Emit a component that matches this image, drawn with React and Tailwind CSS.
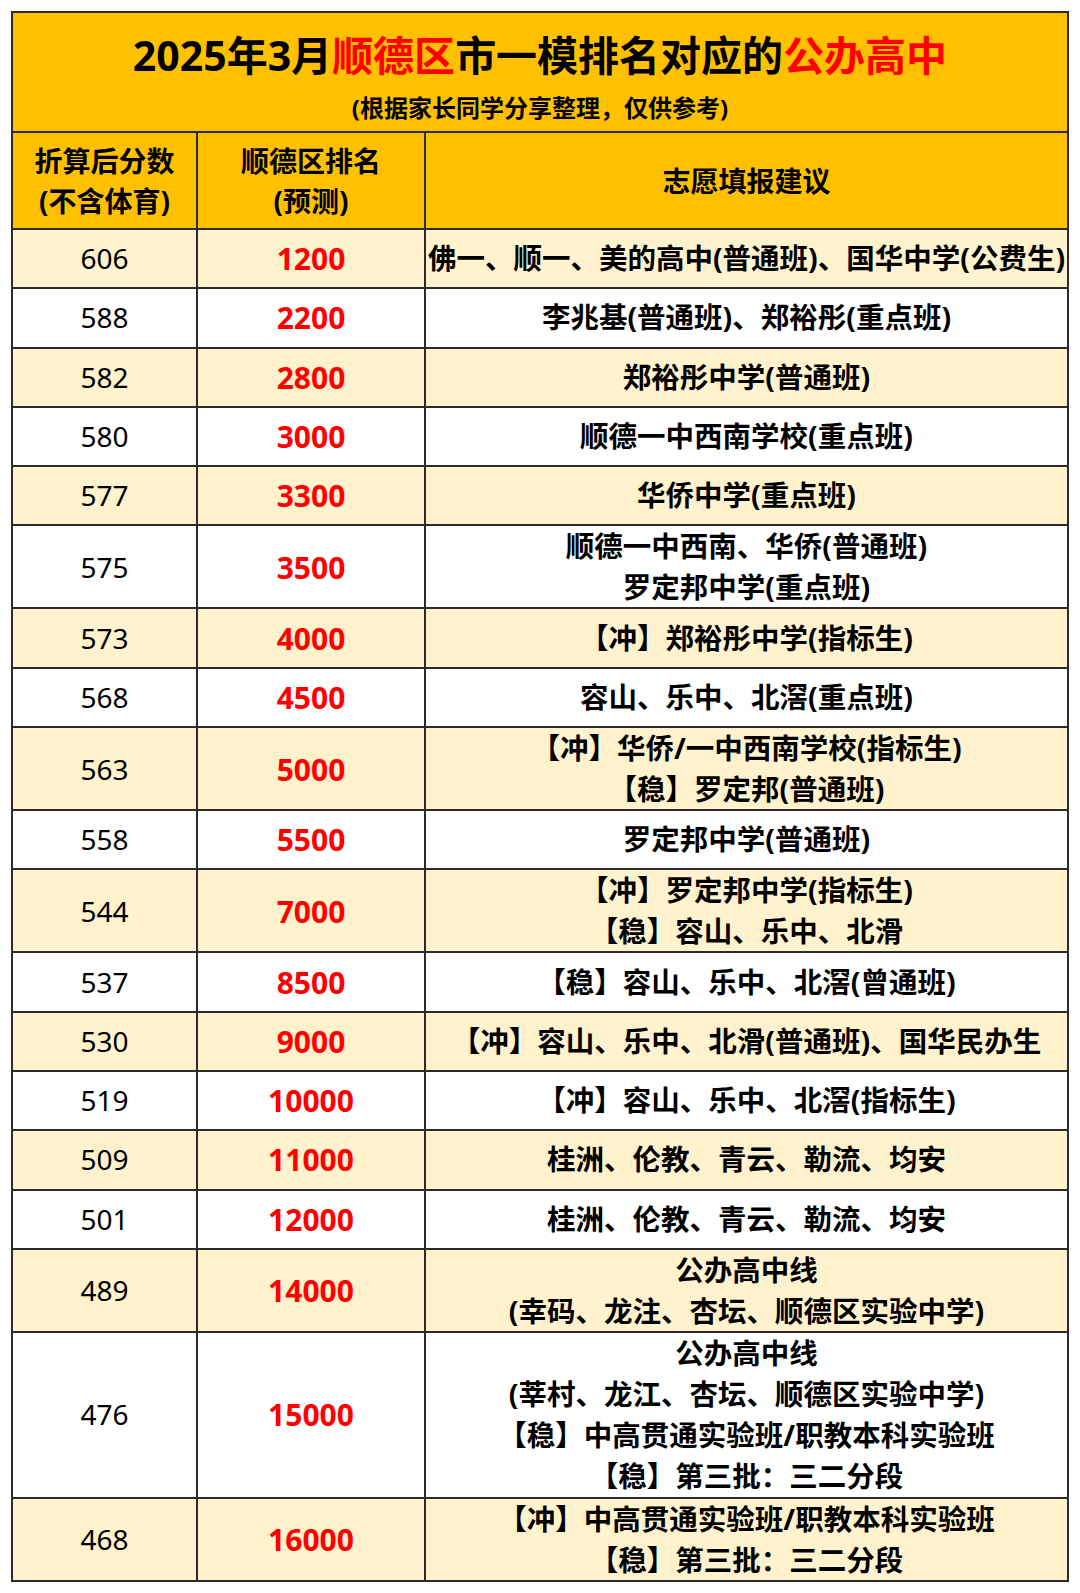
import React from "react";

const rows = [
  { score: "606", rank: "1200", lines: ["佛一、顺一、美的高中(普通班)、国华中学(公费生)"], h: "h-[59.3px]" },
  { score: "588", rank: "2200", lines: ["李兆基(普通班)、郑裕彤(重点班)"], h: "h-[59.3px]" },
  { score: "582", rank: "2800", lines: ["郑裕彤中学(普通班)"], h: "h-[59.3px]" },
  { score: "580", rank: "3000", lines: ["顺德一中西南学校(重点班)"], h: "h-[59.3px]" },
  { score: "577", rank: "3300", lines: ["华侨中学(重点班)"], h: "h-[59.3px]" },
  { score: "575", rank: "3500", lines: ["顺德一中西南、华侨(普通班)", "罗定邦中学(重点班)"], h: "h-[83px]" },
  { score: "573", rank: "4000", lines: ["【冲】郑裕彤中学(指标生)"], h: "h-[59.3px]" },
  { score: "568", rank: "4500", lines: ["容山、乐中、北滘(重点班)"], h: "h-[59.3px]" },
  { score: "563", rank: "5000", lines: ["【冲】华侨/一中西南学校(指标生)", "【稳】罗定邦(普通班)"], h: "h-[83px]" },
  { score: "558", rank: "5500", lines: ["罗定邦中学(普通班)"], h: "h-[59.3px]" },
  { score: "544", rank: "7000", lines: ["【冲】罗定邦中学(指标生)", "【稳】容山、乐中、北滑"], h: "h-[83px]" },
  { score: "537", rank: "8500", lines: ["【稳】容山、乐中、北滘(曾通班)"], h: "h-[59.3px]" },
  { score: "530", rank: "9000", lines: ["【冲】容山、乐中、北滑(普通班)、国华民办生"], h: "h-[59.3px]" },
  { score: "519", rank: "10000", lines: ["【冲】容山、乐中、北滘(指标生)"], h: "h-[59.3px]" },
  { score: "509", rank: "11000", lines: ["桂洲、伦教、青云、勒流、均安"], h: "h-[59.3px]" },
  { score: "501", rank: "12000", lines: ["桂洲、伦教、青云、勒流、均安"], h: "h-[59.3px]" },
  { score: "489", rank: "14000", lines: ["公办高中线", "(幸码、龙注、杏坛、顺德区实验中学)"], h: "h-[83px]" },
  {
    score: "476",
    rank: "15000",
    lines: ["公办高中线", "(莘村、龙江、杏坛、顺德区实验中学)", "【稳】中高贯通实验班/职教本科实验班", "【稳】第三批：三二分段"],
    h: "h-[166px]",
  },
  { score: "468", rank: "16000", lines: ["【冲】中高贯通实验班/职教本科实验班", "【稳】第三批：三二分段"], h: "h-[83px]" },
];

const cell = "flex flex-col items-center justify-center text-center";

export default function App() {
  return (
    <div
      className="min-h-[1593px] bg-white pt-[11px] pl-[11px]"
      style={{ fontFamily: "'Noto Sans', 'Noto Sans CJK SC', sans-serif" }}
    >
      <div className="w-[1058px] border-2 border-[#2b2b2b] text-black">
        {/* title */}
        <div className="h-[118px] bg-[#ffc000] flex flex-col items-center pt-[18px]">
          <h1 className="text-[41px] leading-[48px] font-bold whitespace-nowrap">
            2025年3月<span className="text-[#ff0000]">顺德区</span>市一模排名对应的
            <span className="text-[#ff0000]">公办高中</span>
          </h1>
          <p className="mt-[14px] text-[24px] leading-[30px] font-bold">(根据家长同学分享整理，仅供参考)</p>
        </div>

        {/* header */}
        <div className="grid grid-cols-[183px_228px_1fr] h-[97px] border-t-2 border-[#2b2b2b] bg-[#ffc000] text-[28px] leading-[40px] font-bold">
          <div className={cell}>
            <span>折算后分数</span>
            <span>(不含体育)</span>
          </div>
          <div className={`${cell} border-l-2 border-[#2b2b2b]`}>
            <span>顺德区排名</span>
            <span>(预测)</span>
          </div>
          <div className={`${cell} border-l-2 border-[#2b2b2b]`}>
            <span>志愿填报建议</span>
          </div>
        </div>

        {rows.map((r, i) => (
          <div
            key={r.score}
            className={`grid grid-cols-[183px_228px_1fr] ${r.h} border-t-2 border-[#2b2b2b] leading-[41px] ${
              i % 2 === 0 ? "bg-[#fff2cc]" : "bg-white"
            }`}
          >
            <div className={`${cell} text-[28px]`}>{r.score}</div>
            <div className={`${cell} border-l-2 border-[#2b2b2b] text-[30px] font-bold text-[#ff0000]`}>{r.rank}</div>
            <div className={`${cell} border-l-2 border-[#2b2b2b] text-[28.5px] font-bold whitespace-nowrap`}>
              {r.lines.map((l) => (
                <span key={l}>{l}</span>
              ))}
            </div>
          </div>
        ))}
      </div>
    </div>
  );
}
